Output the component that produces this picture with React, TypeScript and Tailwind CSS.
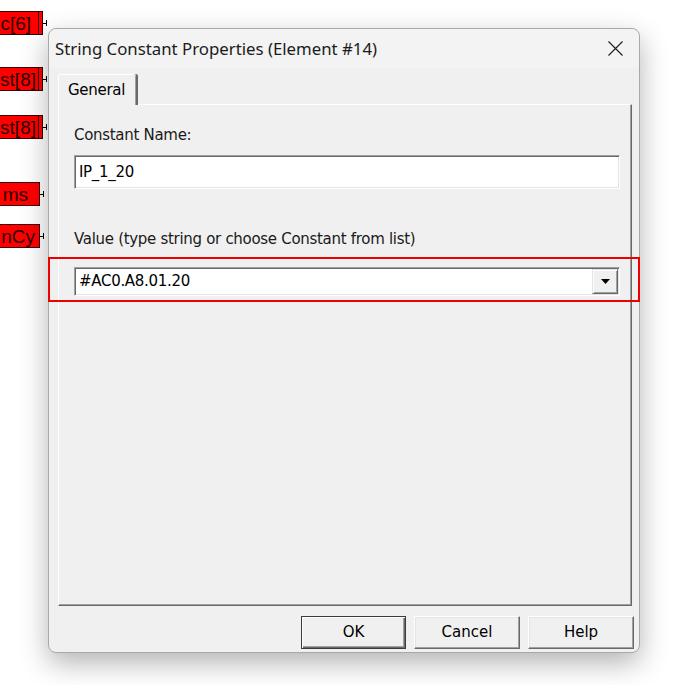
import React from 'react';

const labels = [
  { text: 'c[6]', double: true, top: 'mt-[11px]', pad: 'pr-[7px]' },
  { text: 'st[8]', double: true, top: 'mt-[32px]', pad: 'pr-[2px]' },
  { text: 'st[8]', double: true, top: 'mt-[24px]', pad: 'pr-[2px]' },
  { text: 'ms', double: false, top: 'mt-[43px]', pad: 'pr-[11px]' },
  { text: 'nCy', double: false, top: 'mt-[18px]', pad: 'pr-[4px]' },
];

const TagLabel: React.FC<{ text: string; double: boolean; top: string; pad: string }> = ({ text, double, top, pad }) => (
  <div className={`-ml-[20px] flex items-center ${top}`}>
    <div
      className={`flex h-[24px] items-center justify-end border border-[#3a0000] bg-[#ff0000] ${
        double ? 'w-[63px]' : 'w-[60px]'
      }`}
    >
      <span className={`whitespace-nowrap text-[19px] leading-none text-[#2a0000] ${pad}`}>{text}</span>
      {double && (
        <>
          <span className="h-full w-[1px] shrink-0 bg-[#3a0000]" />
          <span className="w-[3px] shrink-0" />
        </>
      )}
    </div>
    <div className="h-[1px] w-[3px] bg-black" />
    <div className="h-[6px] w-[1px] bg-black" />
  </div>
);

const Sunken: React.FC<{ className?: string; children?: React.ReactNode }> = ({ className = '', children }) => (
  <div
    className={`border border-t-[#a0a0a0] border-l-[#a0a0a0] border-b-white border-r-white bg-white shadow-[inset_1px_1px_0_#696969,inset_-1px_-1px_0_#e3e3e3] ${className}`}
  >
    {children}
  </div>
);

const Button: React.FC<{ label: string; isDefault?: boolean; w: string }> = ({ label, isDefault, w }) => (
  <div
    className={`flex h-[33px] ${w} items-center justify-center bg-[#f0f0f0] text-[15px] text-black ${
      isDefault
        ? 'border border-[#3c3c3c] shadow-[inset_1px_1px_0_#fff,inset_-1px_-1px_0_#696969,inset_-2px_-2px_0_#a0a0a0]'
        : 'border border-t-white border-l-white border-b-[#696969] border-r-[#696969] shadow-[inset_-1px_-1px_0_#a0a0a0,inset_1px_1px_0_#e3e3e3]'
    }`}
  >
    {label}
  </div>
);

export default function App() {
  return (
    <div className="flex h-[685px] w-[684px] overflow-hidden bg-white" style={{ fontFamily: '"Liberation Sans", Arial, sans-serif' }}>
      {/* tags from the diagram behind the dialog */}
      <div className="flex w-[48px] shrink-0 flex-col">
        {labels.map((l, i) => (
          <TagLabel key={i} {...l} />
        ))}
      </div>

      {/* dialog */}
      <div className="relative mt-[28px] flex h-[625px] w-[592px] shrink-0 flex-col rounded-[8px] border border-[#a9a9a9] bg-[#f0f0f0] shadow-[0_10px_28px_rgba(0,0,0,0.3)]">
        <div
          className="flex h-[39px] shrink-0 items-center justify-between rounded-t-[8px] bg-[#f3f3f3] pl-[6px] pr-[16px] text-[16.8px] text-[#1b1b1b]"
          style={{ fontFamily: '"Noto Sans", "Open Sans", sans-serif' }}
        >
          <span>String Constant Properties (Element #14)</span>
          <svg width="15" height="15" viewBox="0 0 15 15" className="mt-[-1px]">
            <path d="M0.5 0.5 L14.5 14.5 M14.5 0.5 L0.5 14.5" stroke="#1b1b1b" strokeWidth="1.1" />
          </svg>
        </div>

        <div
          className="flex flex-1 flex-col pl-[9px] pr-[5px] pt-[6px] pb-[6px] text-[15px] text-black"
          style={{ fontFamily: 'Tahoma, "DejaVu Sans", sans-serif' }}
        >
          {/* tab */}
          <div className="relative z-10 flex h-[31px] w-[78px] items-center rounded-tl-[2px] rounded-tr-[2px] border-l border-t border-white bg-[#f0f0f0] pl-[9px] shadow-[inset_-1px_0_0_#a0a0a0,2px_0_0_#696969]">
            <span className="tracking-[-0.3px]">General</span>
          </div>

          {/* tab panel */}
          <div className="-mt-[1px] flex h-[502px] w-[574px] flex-col border border-t-white border-l-white border-b-[#696969] border-r-[#696969] pl-[15px] pr-[11px] pt-[21px] shadow-[inset_-1px_-1px_0_#a0a0a0]">
            <div className="h-[18px] leading-[18px] tracking-[-0.3px] text-[#1a1a1a]">Constant Name:</div>
            <Sunken className="mt-[11px] flex h-[34px] items-center pl-[4px]">
              <span className="tracking-[-0.3px]">IP_1_20</span>
            </Sunken>
            <div className="mt-[41px] h-[18px] leading-[18px] tracking-[-0.3px] text-[#1a1a1a]">
              Value (type string or choose Constant from list)
            </div>
            <Sunken className="mt-[19px] flex h-[29px] items-center justify-between pl-[4px] pr-[1px]">
              <span className="tracking-[-0.3px]">#AC0.A8.01.20</span>
              <div className="flex h-[25px] w-[26px] items-center justify-center border border-t-[#e3e3e3] border-l-[#e3e3e3] border-b-[#696969] border-r-[#696969] bg-[#f0f0f0] shadow-[inset_1px_1px_0_#fff,inset_-1px_-1px_0_#a0a0a0]">
                <svg width="9" height="5" viewBox="0 0 9 5">
                  <path d="M0 0 H9 L4.5 5 Z" fill="#000" />
                </svg>
              </div>
            </Sunken>
          </div>

          {/* buttons */}
          <div className="mt-[10px] flex justify-end gap-[8px]">
            <Button label="OK" isDefault w="w-[105px]" />
            <Button label="Cancel" w="w-[106px]" />
            <Button label="Help" w="w-[106px]" />
          </div>
        </div>

        {/* red highlight annotation */}
        <div className="pointer-events-none absolute left-[-1px] top-[228px] h-[45px] w-[592px] border-2 border-[#ee0000]" />
      </div>
    </div>
  );
}
